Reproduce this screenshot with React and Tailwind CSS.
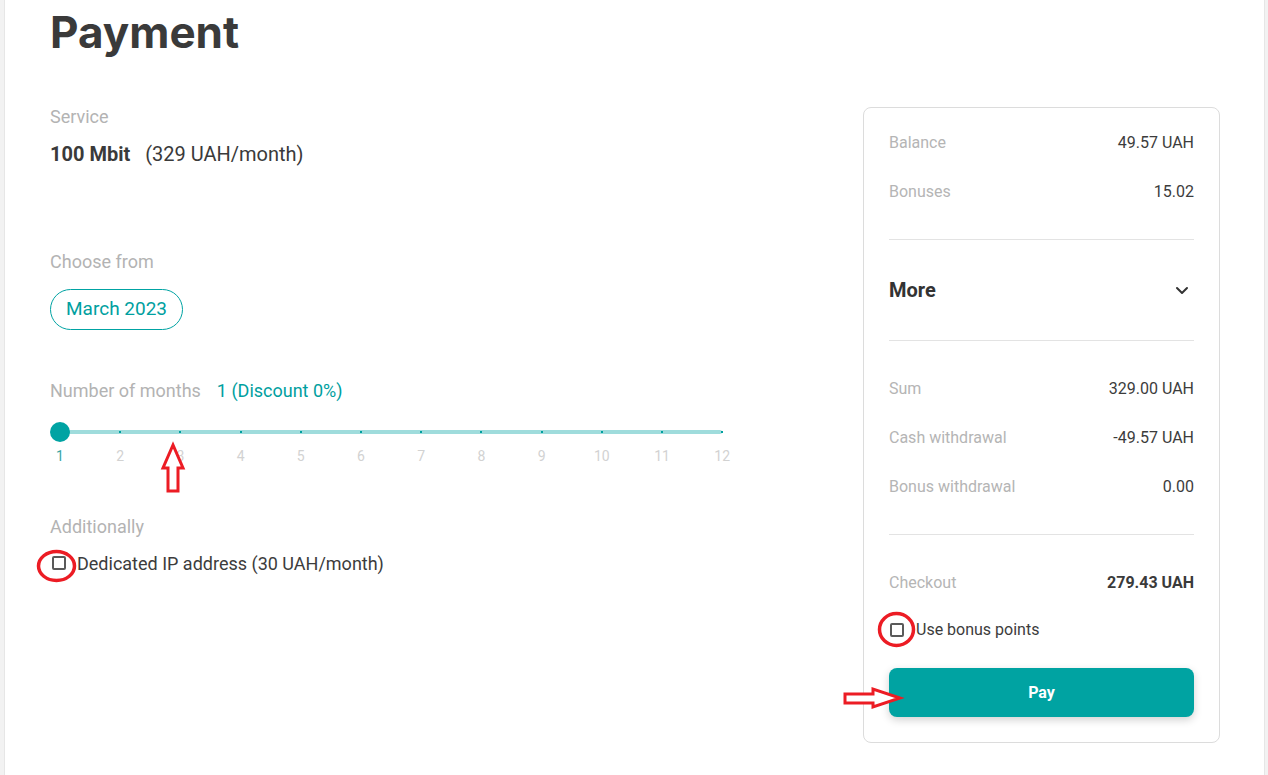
import React from 'react';

const months = [1, 2, 3, 4, 5, 6, 7, 8, 9, 10, 11, 12];

const Checkbox = () => (
  <span className="inline-block w-[14px] h-[14px] border-2 border-[#5a5a5a] rounded-[2px] bg-white shrink-0" />
);

const Row = ({ label, value, bold }) => (
  <div className="flex h-[49px] items-center justify-between text-[16px]">
    <span className="text-[#b5b5b5]">{label}</span>
    <span className={bold ? 'font-bold text-[#3a3a3a]' : 'text-[#3c3c3c]'}>{value}</span>
  </div>
);

export default function App() {
  return (
    <div className="relative h-[775px] bg-[#f2f2f2] font-['Roboto',sans-serif] overflow-hidden">
      <div className="ml-[4px] mr-[3px] h-full bg-white border-x border-[#e6e6e6] flex pl-[45px] pr-[44px] pt-[8px]">
        {/* left column */}
        <div className="flex-1 flex flex-col items-start">
          <h1 className="font-['Inter',sans-serif] font-bold text-[44px] leading-[48px] text-[#3a3a3a]">Payment</h1>

          <div className="mt-[49px] text-[18px] leading-[24px] text-[#b3b3b3]">Service</div>
          <div className="mt-[13px] text-[20px] leading-[24px] text-[#3a3a3a]">
            <span className="font-bold">100 Mbit</span>
            <span className="ml-[15px]">(329 UAH/month)</span>
          </div>

          <div className="mt-[84px] text-[18px] leading-[24px] text-[#b3b3b3]">Choose from</div>
          <button className="mt-[15px] h-[41px] px-[15px] rounded-full border border-[#00a3a3] text-[19px] text-[#00a0a0]">
            March 2023
          </button>

          <div className="mt-[49px] text-[18px] leading-[24px]">
            <span className="text-[#b3b3b3]">Number of months</span>
            <span className="ml-[16px] text-[#00a0a0]">1 (Discount 0%)</span>
          </div>

          {/* slider */}
          <div className="mt-[19px] w-[682px]">
            <div className="relative h-[20px] w-[672px]">
              <div className="absolute left-[10px] right-0 top-[8px] h-[4px] bg-[#9fdcdc] rounded-full" />
              {months.slice(1).map((m) => (
                <span
                  key={m}
                  className="absolute top-[9px] w-[2px] h-[2px] bg-[#00a0a0]"
                  style={{ left: 10 + (m - 1) * 60.2 - 1 }}
                />
              ))}
              <span className="absolute left-0 top-0 w-[20px] h-[20px] rounded-full bg-[#00a3a3]" />
            </div>
            <div className="relative mt-[6px] h-[16px] text-[14px] leading-[16px]">
              {months.map((m) => (
                <span
                  key={m}
                  className={`absolute -translate-x-1/2 ${m === 1 ? 'text-[#3aa5a5]' : 'text-[#d2d2d2]'}`}
                  style={{ left: 10 + (m - 1) * 60.2 }}
                >
                  {m}
                </span>
              ))}
            </div>
          </div>

          <div className="mt-[51px] text-[18px] leading-[24px] text-[#b3b3b3]">Additionally</div>
          <label className="mt-[12px] flex items-center h-[24px] text-[18px] text-[#3c3c3c]">
            <span className="ml-[2px] mr-[11px] flex"><Checkbox /></span>
            Dedicated IP address (30 UAH/month)
          </label>
        </div>

        {/* summary card */}
        <div className="mt-[99px] w-[357px] h-[636px] border border-[#dcdcdc] rounded-[8px] px-[25px] pt-[10px] self-start">
          <Row label="Balance" value="49.57 UAH" />
          <Row label="Bonuses" value="15.02" />
          <div className="mt-[23px] border-t border-[#e3e3e3]" />
          <div className="h-[100px] flex items-center justify-between">
            <span className="text-[20px] font-bold text-[#333]">More</span>
            <svg width="14" height="9" viewBox="0 0 14 9" className="mr-[5px]">
              <path d="M2 2l5 5 5-5" fill="none" stroke="#333" strokeWidth="2" strokeLinecap="round" strokeLinejoin="round" />
            </svg>
          </div>
          <div className="border-t border-[#e3e3e3]" />
          <div className="pt-[23px]">
            <Row label="Sum" value="329.00 UAH" />
            <Row label="Cash withdrawal" value="-49.57 UAH" />
            <Row label="Bonus withdrawal" value="0.00" />
          </div>
          <div className="mt-[23px] border-t border-[#e3e3e3]" />
          <div className="pt-[23px]">
            <Row label="Checkout" value="279.43 UAH" bold />
          </div>
          <label className="h-[46px] flex items-center text-[16px] text-[#3c3c3c]">
            <span className="ml-[1px] mr-[12px] flex"><Checkbox /></span>
            Use bonus points
          </label>
          <button className="mt-[15px] w-full h-[49px] rounded-[8px] bg-[#00a3a2] text-white font-bold text-[16px] shadow-[0_3px_8px_rgba(0,0,0,0.18)]">
            Pay
          </button>
        </div>
      </div>

      {/* red annotation marks */}
      <svg className="absolute inset-0 pointer-events-none" width="1268" height="775">
        <ellipse cx="56.5" cy="566" rx="18" ry="14.5" fill="none" stroke="#ec1c24" strokeWidth="3.5" />
        <ellipse cx="896.5" cy="629.5" rx="17" ry="16" fill="none" stroke="#ec1c24" strokeWidth="3.5" />
        <polygon
          points="173,445 163,468 168,468 168,491 178,491 178,468 183,468"
          fill="white"
          stroke="#ec1c24"
          strokeWidth="3"
          strokeLinejoin="miter"
        />
        <polygon
          points="845,694 873,694 873,689 900,698 873,707 873,703 845,703"
          fill="white"
          stroke="#ec1c24"
          strokeWidth="3"
        />
      </svg>
    </div>
  );
}
